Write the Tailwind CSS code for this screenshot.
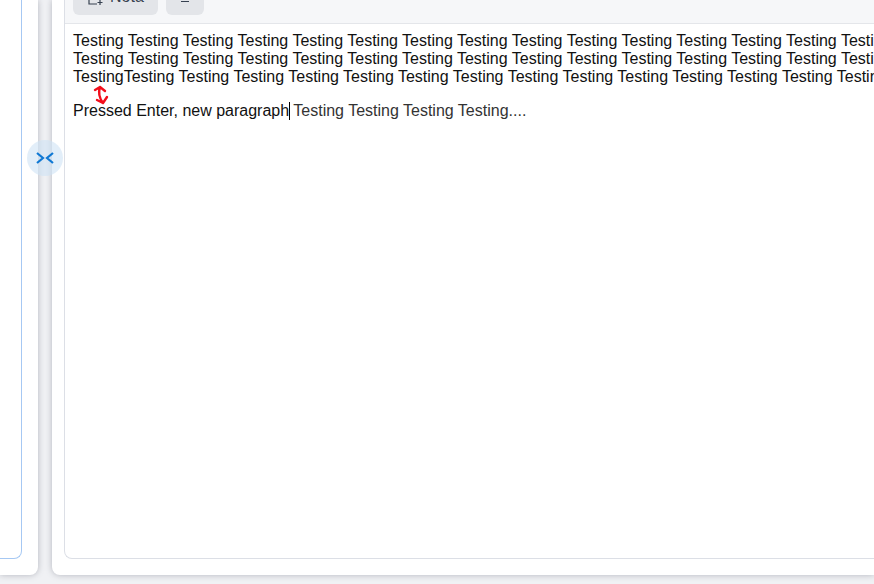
<!DOCTYPE html>
<html lang="en">
<head>
  <meta charset="UTF-8" />
  <title>Editor</title>
  <script src="https://cdn.jsdelivr.net/npm/@tailwindcss/browser@4"></script>
</head>
<body class="bg-[#f0f1f4] overflow-hidden font-['Liberation_Sans',Arial,sans-serif]">
  <div class="flex h-[584px] w-[874px] overflow-hidden pb-[9px] relative">

    <!-- left panel, collapsed off screen -->
    <div class="w-[38px] shrink-0 bg-white rounded-br-[8px] pb-[16px] pr-[16px] shadow-[0_0_6px_rgba(90,95,110,0.4)]">
      <div class="h-full bg-white border-r border-b border-[#a6c8f3] rounded-br-[8px]"></div>
    </div>

    <!-- collapse handle -->
    <button class="absolute left-[27px] top-[140px] w-[36px] h-[36px] rounded-full bg-[#cfe3f5]/60 flex items-center justify-center">
      <svg width="20" height="14" viewBox="0 0 20 14" fill="none" stroke="#0f78d4" stroke-width="2.2">
        <path d="M2 2 L8 7 L2 12" />
        <path d="M18 2 L12 7 L18 12" />
      </svg>
    </button>

    <!-- right panel -->
    <div class="ml-[14px] flex-1 min-w-0 bg-white rounded-bl-[8px] pl-[12px] pb-[16px] shadow-[0_0_6px_rgba(90,95,110,0.4)]">
      <div class="h-full flex flex-col border-l border-b border-[#dcdfe6] rounded-bl-[8px] overflow-hidden">
        <div class="h-[24px] shrink-0 bg-[#f6f7f9] border-b border-[#e4e6ea] pl-[8px] flex gap-[8px] items-end pb-[8px]">
          <div class="w-[85px] h-[36px] shrink-0 rounded-[6px] bg-[#e3e5e9] flex items-end pb-[10px] pl-[15px] gap-[6px] text-[#374151] text-[16px] leading-none">
            <svg width="16" height="16" viewBox="0 0 16 16" fill="none" stroke="#374151" stroke-width="1.2">
              <path d="M1 2 V15 H9 M12 11 V16 M9.5 13.5 H14.5" />
            </svg>
            <span>Nota</span>
          </div>
          <div class="w-[38px] h-[36px] shrink-0 rounded-[6px] bg-[#e3e5e9] flex items-end justify-center pb-[13px]">
            <div class="w-[8px] h-[1.5px] bg-[#374151]"></div>
          </div>
        </div>
        <div class="flex-1 pl-[8px] pt-[8px] text-[16px] leading-[18px] text-[#111] whitespace-nowrap overflow-hidden">
          <p>Testing Testing Testing Testing Testing Testing Testing Testing Testing Testing Testing Testing Testing Testing Testing Testing</p>
          <p>Testing Testing Testing Testing Testing Testing Testing Testing Testing Testing Testing Testing Testing Testing Testing Testing</p>
          <p>TestingTesting Testing Testing Testing Testing Testing Testing Testing Testing Testing Testing Testing Testing Testing Testing</p>
          <svg class="absolute left-[92px] top-[85px]" width="18" height="20" viewBox="0 0 18 20" fill="none" stroke="#f20d1a" stroke-width="2.4" stroke-linecap="round" stroke-linejoin="round">
            <path d="M3 5 L8 2 L13 6 M8 2 C6 8 8 14 11 18 M5 15 L11 18 L15 12" />
          </svg>
          <p class="mt-[16px]">Pressed Enter, new paragraph<span class="inline-block w-px h-[18px] -mr-px bg-black align-top"></span> <span class="text-[#333]">Testing Testing Testing Testing....</span></p>
        </div>
      </div>
    </div>
  </div>
</body>
</html>
